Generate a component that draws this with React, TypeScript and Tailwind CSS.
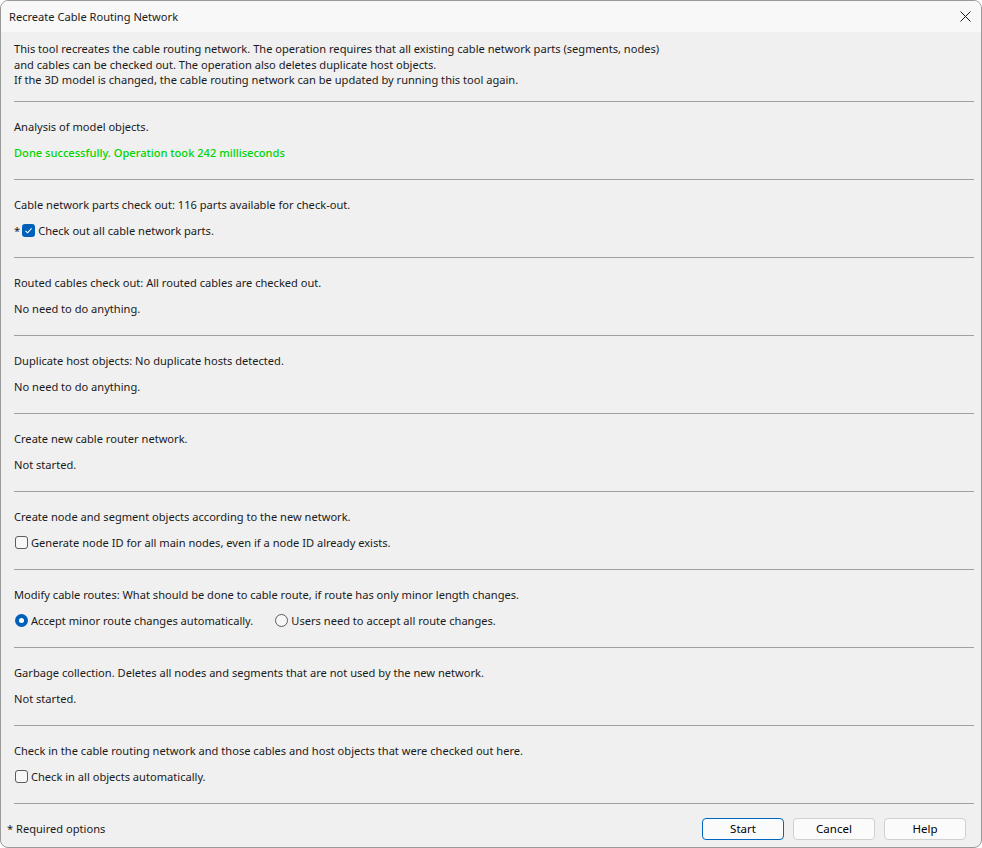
import type { ReactNode } from "react";

function Check({ checked }: { checked?: boolean }) {
  return checked ? (
    <span className="inline-flex h-[13px] w-[13px] items-center justify-center rounded-[3px] bg-[#005fb8]">
      <svg width="9" height="9" viewBox="0 0 9 9" fill="none">
        <path d="M1.5 4.8 L3.6 6.8 L7.6 2.3" stroke="#fff" strokeWidth="1.1" />
      </svg>
    </span>
  ) : (
    <span className="inline-block h-[13px] w-[13px] rounded-[3px] border border-[#5c5c5c] bg-[#f7f7f7]" />
  );
}

function Radio({ checked }: { checked?: boolean }) {
  return checked ? (
    <span className="inline-flex h-[13px] w-[13px] items-center justify-center rounded-full bg-[#005fb8]">
      <span className="h-[5px] w-[5px] rounded-full bg-white" />
    </span>
  ) : (
    <span className="inline-block h-[13px] w-[13px] rounded-full border border-[#5c5c5c] bg-[#f7f7f7]" />
  );
}

function Section({ title, children }: { title: string; children: ReactNode }) {
  return (
    <div className="border-t border-[#a0a0a0] pt-[17px] pb-[18px]">
      <div className="h-[16px]">{title}</div>
      <div className="mt-[10px] flex h-[16px] items-center">{children}</div>
    </div>
  );
}

function Btn({ label, primary }: { label: string; primary?: boolean }) {
  return (
    <button
      className={
        "h-[22px] w-[82px] rounded-[4px] bg-[#fbfbfb] text-[11.5px] text-black " +
        (primary ? "border border-[#0067c0]" : "border border-[#d0d0d0]")
      }
    >
      {label}
    </button>
  );
}

export default function App() {
  return (
    <div className="h-[848px] w-[982px] overflow-hidden rounded-lg border border-[#9a9a9a] bg-[#f0f0f0] font-['Segoe_UI','Noto_Sans',sans-serif] text-[11.1px] leading-[16px] text-[#1a1a1a]">
      <div className="flex h-[31px] items-center justify-between bg-[#f8f8f8] pl-[8px] pr-[10px]">
        <span>Recreate Cable Routing Network</span>
        <svg width="11" height="11" viewBox="0 0 11 11">
          <path d="M0.5 0.5 L10.5 10.5 M10.5 0.5 L0.5 10.5" stroke="#1a1a1a" strokeWidth="1" />
        </svg>
      </div>

      <div className="pl-[13px] pr-[7px]">
        <div className="pt-[9px] pb-[13px] leading-[15.5px]">
          <div>
            This tool recreates the cable routing network. The operation requires that all existing cable network parts (segments, nodes)
          </div>
          <div>and cables can be checked out. The operation also deletes duplicate host objects.</div>
          <div>If the 3D model is changed, the cable routing network can be updated by running this tool again.</div>
        </div>

        <Section title="Analysis of model objects.">
          <span className="font-medium text-[#00d400]">Done successfully. Operation took 242 milliseconds</span>
        </Section>
        <Section title="Cable network parts check out: 116 parts available for check-out.">
          <span className="mr-[2px]">*</span>
          <Check checked />
          <span className="ml-[3px]">Check out all cable network parts.</span>
        </Section>
        <Section title="Routed cables check out: All routed cables are checked out.">
          <span>No need to do anything.</span>
        </Section>
        <Section title="Duplicate host objects: No duplicate hosts detected.">
          <span>No need to do anything.</span>
        </Section>
        <Section title="Create new cable router network.">
          <span>Not started.</span>
        </Section>
        <Section title="Create node and segment objects according to the new network.">
          <span className="ml-[1px]" />
          <Check />
          <span className="ml-[3px]">Generate node ID for all main nodes, even if a node ID already exists.</span>
        </Section>
        <Section title="Modify cable routes: What should be done to cable route, if route has only minor length changes.">
          <span className="ml-[1px]" />
          <Radio checked />
          <span className="ml-[3px]">Accept minor route changes automatically.</span>
          <span className="ml-[22px]" />
          <Radio />
          <span className="ml-[3px]">Users need to accept all route changes.</span>
        </Section>
        <Section title="Garbage collection. Deletes all nodes and segments that are not used by the new network.">
          <span>Not started.</span>
        </Section>
        <Section title="Check in the cable routing network and those cables and host objects that were checked out here.">
          <span className="ml-[1px]" />
          <Check />
          <span className="ml-[3px]">Check in all objects automatically.</span>
        </Section>

        <div className="flex items-center justify-between border-t border-[#a0a0a0] pt-[14px]">
          <span className="-ml-[7px]">* Required options</span>
          <div className="mr-[8px] flex gap-[9px]">
            <Btn label="Start" primary />
            <Btn label="Cancel" />
            <Btn label="Help" />
          </div>
        </div>
      </div>
    </div>
  );
}
